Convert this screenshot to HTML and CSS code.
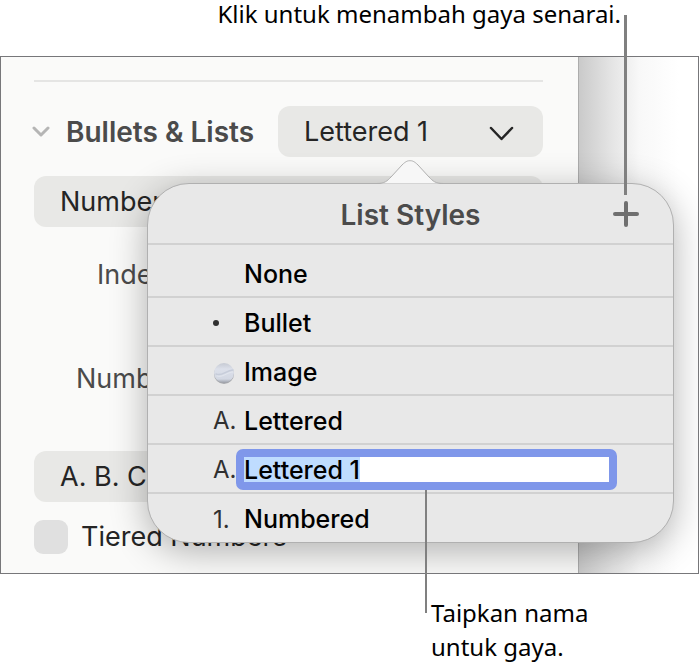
FILE: index.html
```
<!DOCTYPE html>
<html lang="ms">
<head>
    <meta charset="UTF-8">
    <title>List Styles</title>
    <link rel="stylesheet" href="styles.css">
</head>
<body>
    <figure class="figure">
        <figcaption class="callout callout-top">Klik untuk menambah gaya senarai.</figcaption>
        <div class="window">
            <form class="sidebar">
                <hr class="divider">
                <div class="section-row">
                    <button type="button" class="section-toggle">
                        <svg width="18" height="11" viewBox="0 0 18 11"><path d="M2 2l7 7 7-7"/></svg>
                        <span>Bullets &amp; Lists</span>
                    </button>
                    <div class="picker">
                        <select aria-label="List style">
                            <option>Lettered 1</option>
                        </select>
                        <svg width="25" height="15" viewBox="0 0 25 15"><path d="M2 2l10.500 11L23 2"/></svg>
                    </div>
                </div>
                <select class="numbers" aria-label="List type">
                    <option>Numbers</option>
                </select>
                <div class="field field-indent">Indent:</div>
                <div class="field field-number">Number:</div>
                <select class="format" aria-label="Number format">
                    <option>A. B. C. D.</option>
                </select>
                <label class="tiered"><input type="checkbox"> Tiered Numbers</label>
            </form>
            <div class="canvas"></div>
            <div class="popover">
                <svg class="arrow" width="66" height="24" viewBox="0 0 66 24">
                    <path d="M0 23.500C8 23.500 10 21 14 17L25 5C29 1 31 .7 33 .7s4 .3 8 4.300l11 12c4 4 6 6.500 14 6.500"/>
                </svg>
                <div class="popover-header">
                    <h2>List Styles</h2>
                    <button type="button" class="add" aria-label="Add list style">
                        <svg width="26" height="26" viewBox="0 0 26 26"><path d="M13 2v22M2 13h22"/></svg>
                    </button>
                </div>
                <ul class="styles">
                    <li><span class="marker"></span>None</li>
                    <li><span class="marker"><i class="dot"></i></span>Bullet</li>
                    <li>
                        <span class="marker">
                            <svg class="ball" width="24" height="24" viewBox="0 0 24 24">
                                <defs>
                                    <linearGradient id="ball" x1="0" y1="0" x2="0" y2="1">
                                        <stop offset="0" stop-color="#c6cad3"/>
                                        <stop offset=".3" stop-color="#dce0ea"/>
                                        <stop offset=".8" stop-color="#d3d8e3"/>
                                        <stop offset="1" stop-color="#989ca5"/>
                                    </linearGradient>
                                </defs>
                                <circle cx="11" cy="14" r="10" fill="#a6a8ac"/>
                                <circle cx="11" cy="13" r="10" fill="url(#ball)"/>
                                <path d="M3 14c6 3 10-4 17-4" fill="none" stroke="#c6ccd9" stroke-width="1.500"/>
                                <path d="M4 16c6 2 10-4 16-4" fill="none" stroke="#e2e6ee"/>
                            </svg>
                        </span>Image
                    </li>
                    <li><span class="marker">A.</span>Lettered</li>
                    <li>
                        <span class="marker">A.</span>
                        <input type="text" id="styleName" aria-label="Style name" value="Lettered 1" spellcheck="false" autofocus>
                    </li>
                    <li><span class="marker">1.</span>Numbered</li>
                </ul>
            </div>
        </div>
        <figcaption class="callout callout-bottom">Taipkan nama<br>untuk gaya.</figcaption>
        <span class="leader leader-add"></span>
        <span class="leader leader-name"></span>
    </figure>
    <script>
        // The new style's name is ready to be typed over
        const styleName = document.getElementById('styleName');
        styleName.focus();
        styleName.select();
    </script>
</body>
</html>
```

FILE: styles.css
```
* {
    box-sizing: border-box;
}
body {
    margin: 0;
    background-color: #fff;
    font-family: Inter, "Liberation Sans", sans-serif;
    font-size: 27px;
    color: #252525;
}
button, select, input {
    margin: 0;
    padding: 0;
    border: none;
    background: none;
    font: inherit;
    color: inherit;
    appearance: none;
}
svg {
    display: block;
    fill: none;
    stroke-linecap: round;
    stroke-linejoin: round;
}
.figure {
    position: relative;
    margin: 0 1px 0 0;
}
.callout {
    font-family: "Noto Sans", "Open Sans", sans-serif;
    font-size: 24px;
    line-height: 34px;
    color: #000;
}
.callout-top {
    height: 56px;
    padding-right: 78px;
    line-height: 28px;
    text-align: right;
}
.callout-bottom {
    padding: 22px 0 0 431px;
}
.window {
    position: relative;
    display: flex;
    border: 1px solid #77777a;
    overflow: hidden;
}
.sidebar {
    flex: none;
    display: flex;
    flex-direction: column;
    width: 577px;
    padding: 23px 35px 19px 33px;
    background-color: #fafaf9;
}
.divider {
    width: 100%;
    height: 2px;
    margin: 0;
    border: none;
    background-color: #e5e5e4;
}
.section-row {
    display: flex;
    justify-content: space-between;
    margin: 24px 0 19px;
}
.section-toggle {
    display: flex;
    align-items: center;
    gap: 16px;
    margin-left: -2px;
    font-size: 28px;
    font-weight: 600;
    color: #4b4b4b;
}
.section-toggle svg {
    stroke: #b5b5b5;
    stroke-width: 3;
}
select {
    width: 100%;
    height: 51px;
    padding-left: 26px;
    border-radius: 12px;
    background-color: #e8e8e6;
}
.picker {
    position: relative;
    width: 265px;
}
.picker svg {
    position: absolute;
    top: 20px;
    right: 29px;
    stroke: #252525;
    stroke-width: 2.500;
    pointer-events: none;
}
.field {
    line-height: 48px;
    color: #4b4b4b;
}
.field-indent {
    margin-top: 24px;
    padding-left: 63px;
}
.field-number {
    margin: 56px 0 48px;
    padding-left: 42px;
}
.tiered {
    display: flex;
    align-items: center;
    gap: 13px;
    margin-top: 17px;
    line-height: 35px;
}
.tiered input {
    width: 34px;
    height: 34px;
    border-radius: 9px;
    background-color: #e0e0e0;
}
.canvas {
    flex: 1;
    border-left: 1px solid #acacac;
    background: linear-gradient(to right, #cacaca, #e4e4e4 32px, #f8f8f8 60px, #fff 100px);
}
.popover {
    position: absolute;
    top: 126px;
    left: 146px;
    right: 24px;
    border: 1px solid #b0b0b0;
    border-radius: 42px;
    background-color: #e8e8e8;
    box-shadow: 0 8px 36px rgba(0, 0, 0, 0.3);
}
.arrow {
    position: absolute;
    top: -24px;
    left: 229px;
    fill: #f7f7f7;
    stroke: #b0b0b0;
}
.popover-header {
    display: flex;
    align-items: center;
    justify-content: center;
    height: 61px;
    border-bottom: 2px solid #d1d1d1;
}
.popover-header h2 {
    margin: 0;
    padding-top: 2px;
    font-size: 28px;
    font-weight: 600;
    color: #4b4b4b;
}
.add {
    position: absolute;
    right: 34px;
    stroke: #6f6f6f;
    stroke-width: 4;
}
.styles {
    margin: 0;
    padding: 4px 0 0;
    list-style: none;
    font-size: 25px;
    font-weight: 500;
    color: #000;
}
.styles li {
    display: flex;
    align-items: center;
    height: 49px;
    padding: 2px 56px 0 65px;
    border-bottom: 2px solid #d1d1d1;
}
.styles li:last-child {
    height: 48px;
    border-bottom: none;
}
.marker {
    flex: none;
    width: 31px;
    font-weight: 400;
    font-size: 24px;
    color: #303030;
}
.dot {
    display: block;
    width: 6px;
    height: 6px;
    border-radius: 50%;
    background-color: #303030;
}
.styles input {
    flex: 1;
    min-width: 0;
    height: 41px;
    margin-left: -8px;
    border: 8px solid #7f97ea;
    border-radius: 7px;
    background-color: #fff;
    line-height: 25px;
    outline: none;
}
.styles input::selection {
    background-color: #bfdcff;
    color: #000;
}
.leader {
    position: absolute;
    background-color: #808080;
}
.leader-add {
    top: 15px;
    right: 72px;
    width: 3px;
    height: 180px;
}
.leader-name {
    top: 490px;
    left: 425px;
    width: 2px;
    height: 123px;
}
```
